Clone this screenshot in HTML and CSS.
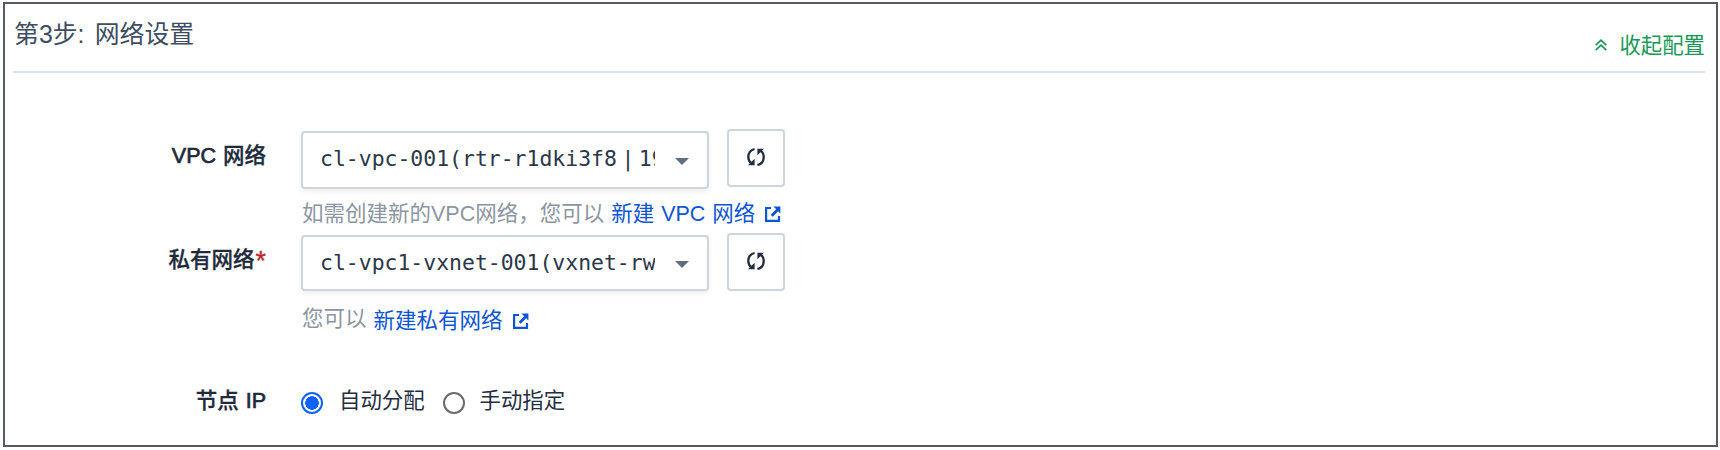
FILE: index.html
```html
<!DOCTYPE html>
<html lang="zh-CN">
<head>
<meta charset="utf-8">
<title>网络设置</title>
<link rel="stylesheet" href="styles.css">
</head>
<body>
<svg class="defs" width="0" height="0">
  <symbol id="refresh" viewBox="0 0 20 20">
    <path d="M8.600 2C4.600 3 2.300 6.100 2.300 10c0 2.900 1.200 5.100 3.200 6.400M11.400 18c4-1 6.300-4.100 6.300-8 0-2.900-1.200-5.100-3.200-6.400" fill="none" stroke="currentColor" stroke-width="2.300"/>
    <path d="M2 18.300h6.600v-6.600zM18 1.700h-6.600v6.600z" fill="currentColor"/>
  </symbol>
  <symbol id="external" viewBox="0 0 16 16">
    <path d="M6 2H1.100v12.900H14V10" fill="none" stroke="currentColor" stroke-width="2.200"/>
    <path d="M8.500 .6H15.400v6.900l-2.200-2.200-5.500 5.500-2-2 5.500-5.500z" fill="currentColor"/>
  </symbol>
</svg>
<main class="panel">
  <header class="header">
    <h1 class="title">第3步: 网络设置</h1>
    <a class="collapse">
      <svg class="chevrons" viewBox="0 0 12 12"><path d="M.7 6.200 6 1.200l5.300 5M.7 11.200 6 6.200l5.300 5" fill="none" stroke="currentColor" stroke-width="1.700"/></svg>
      <span>收起配置</span>
    </a>
  </header>
  <section class="row row-vpc">
    <div class="label"><span class="latin">VPC</span> 网络</div>
    <div class="field">
      <div class="controls">
        <div class="select"><span class="value">cl-vpc-001(rtr-r1dki3f8<span class="bar">|</span>19</span><i class="caret"></i></div>
        <button class="refresh"><svg><use href="#refresh"/></svg></button>
      </div>
      <p class="help"><span>如需创建新的VPC网络，您可以</span><a class="link">新建 VPC 网络<svg><use href="#external"/></svg></a></p>
    </div>
  </section>
  <section class="row row-vxnet">
    <div class="label">私有网络<span class="required">*</span></div>
    <div class="field">
      <div class="controls">
        <div class="select"><span class="value">cl-vpc1-vxnet-001(vxnet-rw</span><i class="caret"></i></div>
        <button class="refresh"><svg><use href="#refresh"/></svg></button>
      </div>
      <p class="help"><span>您可以</span><a class="link">新建私有网络<svg><use href="#external"/></svg></a></p>
    </div>
  </section>
  <section class="row row-ip">
    <div class="label">节点 <span class="latin">IP</span></div>
    <div class="radios">
      <i class="radio checked"></i><span class="option">自动分配</span>
      <i class="radio"></i><span class="option">手动指定</span>
    </div>
  </section>
</main>
</body>
</html>
```

FILE: styles.css
```css
* { box-sizing: border-box; }
body { margin: 0; padding: 2px 2px 0 3px; background: #fff; color: #242e42; font: 21.4px/30px "Liberation Sans", "Noto Sans CJK SC", sans-serif; }
.defs { position: absolute; }
h1, p { margin: 0; }
.panel { height: 445px; border: 2px solid #555a66; }
.header { display: flex; justify-content: space-between; height: 69px; margin: 0 11px 0 8px; border-bottom: 2px solid #dbe4ec; }
.title { padding: 12px 0 0 1px; font-size: 24.9px; font-weight: 400; line-height: 36px; word-spacing: 3.2px; color: #3f4d61; }
.collapse { display: flex; align-items: flex-start; gap: 12px; padding-top: 27px; color: #189a56; }
.chevrons { width: 12px; height: 12px; margin-top: 8px; }
.row { display: grid; grid-template-columns: 261px 1fr; column-gap: 35px; }
.label { padding-top: 12px; text-align: right; font-size: 21.5px; font-weight: 500; white-space: nowrap; word-spacing: 1px; color: #1f2b3b; -webkit-text-stroke: 0.3px currentColor; }
.latin { -webkit-text-stroke: 0.7px currentColor; }
.required { margin-left: 1px; font-size: 27px; line-height: 20px; vertical-align: -3px; color: #c2242c; }
.row-vpc { height: 160px; padding-top: 56px; }
.row-vxnet { height: 148px; }
.controls { display: flex; align-items: flex-end; gap: 18px; height: 58px; }
.row-vpc .controls { align-items: flex-start; height: 60px; }
.row-vpc .select { height: 58px; margin-top: 2px; padding-bottom: 2px; }
.select { display: flex; align-items: center; width: 408px; height: 56px; padding: 0 18px 0 17px; border: 2px solid #ccd5e0; border-radius: 4px; background: #fff; box-shadow: 0 3px 5px rgba(36, 46, 66, .07); }
.value { width: 335px; overflow: hidden; white-space: nowrap; font: 21.45px/34px "DejaVu Sans Mono", monospace; color: #2b374a; }
.bar { display: inline-block; width: 22px; text-align: center; }
.caret { flex: none; margin: 3px 0 0 20px; border: 7px solid transparent; border-top-color: #5f6f80; border-bottom: 0; }
.row-vpc .caret { margin-top: 5px; }
.refresh { display: flex; align-items: center; justify-content: center; width: 58px; height: 58px; padding: 0 0 2px; border: 2px solid #ccd5e0; border-radius: 4px; background: #fff; color: #242e42; }
.refresh svg { width: 20px; height: 20px; }
.help { display: flex; gap: 7px; padding: 10px 0 0 1px; font-size: 21.5px; color: #8c96a3; white-space: nowrap; }
.row-vxnet .help { padding-top: 13px; }
.row-vxnet .link { padding-top: 2px; }
.link { display: flex; align-items: center; word-spacing: 1px; color: #0c55d4; }
.link svg { width: 16px; height: 16px; margin: -1px 0 0 10px; }
.row-ip .label { padding-top: 5px; }
.radios { display: flex; align-items: center; height: 44px; }
.radio { width: 22px; height: 22px; border: 2px solid #6b6b6b; border-radius: 50%; }
.checked { border-color: #0f62fe; background: radial-gradient(circle, #0f62fe 6.500px, #fff 7px); }
.option { margin: -4px 18px 0 16px; }
.option:last-child { margin-left: 15px; }
```
